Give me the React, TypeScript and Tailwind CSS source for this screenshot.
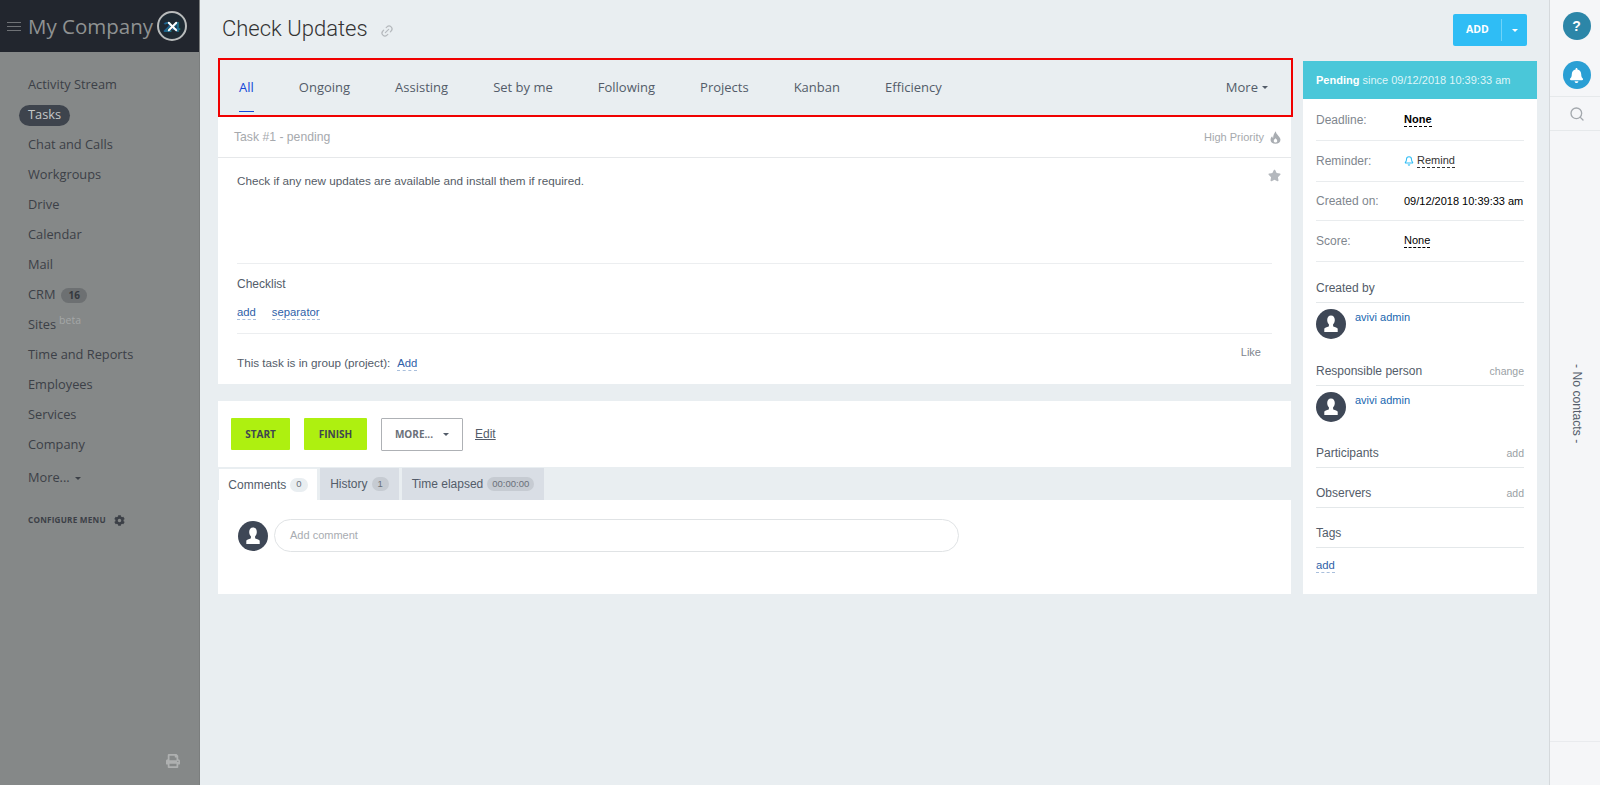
import React from "react";
import { Bell, Link2, Search, X } from "lucide-react";
import { FaCog, FaPrint, FaStar, FaBell } from "react-icons/fa";

const body = "font-['Liberation_Sans',Arial,sans-serif]";
const open = "font-['Open_Sans',sans-serif]";

const menu = [
  "Activity Stream",
  "Tasks",
  "Chat and Calls",
  "Workgroups",
  "Drive",
  "Calendar",
  "Mail",
  "CRM",
  "Sites",
  "Time and Reports",
  "Employees",
  "Services",
  "Company",
];

const tabs = ["All", "Ongoing", "Assisting", "Set by me", "Following", "Projects", "Kanban", "Efficiency"];

const Caret = ({ className = "" }: { className?: string }) => (
  <span className={`inline-block w-0 h-0 border-x-[3px] border-x-transparent border-t-[3px] ${className}`} />
);

const Avatar = () => (
  <svg viewBox="0 0 30 30" className="w-[30px] h-[30px] shrink-0">
    <circle cx="15" cy="15" r="15" fill="#3e4756" />
    <path
      d="M15 6.5c-2.4 0-3.8 1.9-3.8 4.4 0 1.8.7 3.4 1.7 4.4v1.9c-.6.7-4.2 1.2-4.6 2.6v3.2h13.400v-3.200c-.4-1.400-4-1.900-4.600-2.600v-1.900c1-1 1.700-2.600 1.700-4.400 0-2.500-1.400-4.400-3.800-4.400z"
      fill="#fff"
    />
  </svg>
);

const Flame = () => (
  <svg viewBox="0 0 12 14" className="w-[11px] h-[13px]">
    <path
      fillRule="evenodd"
      d="M6.300.3c.3 2.200 1.300 3.200 2.700 4.700 1.300 1.400 2.400 2.700 2.400 4.400 0 2.600-2.300 4.500-5.400 4.500S.6 12 .6 9.400c0-1.500.7-2.800 1.700-3.700.1 1 .5 1.600 1.100 2C3.500 4.800 4.600 2.200 6.300.3zM6 7.800c-1.100 1-1.900 1.800-1.900 2.900 0 1 .8 1.700 1.900 1.700s1.900-.7 1.900-1.700c0-1.100-.8-1.900-1.900-2.900z"
      fill="#a9adb2"
    />
  </svg>
);

const DashLink = ({ children }: { children: React.ReactNode }) => (
  <a className="text-[11.3px] text-[#2f5fa8] border-b border-dashed border-[#a9bfdc] leading-[14px]">{children}</a>
);

const InfoRow = ({ label, children, h }: { label: string; children: React.ReactNode; h: string }) => (
  <div className={`flex items-center border-b border-[#e9ecee] ${h}`}>
    <span className="w-[88px] text-[#80868e] text-[12px]">{label}</span>
    {children}
  </div>
);

const Section = ({ title, action, h = "h-[40px]" }: { title: string; action?: string; h?: string }) => (
  <div className={`flex items-end justify-between border-b border-[#e4e8ea] pb-[5px] ${h}`}>
    <span className="text-[#535c69] text-[12px]">{title}</span>
    {action && <span className="text-[#9a9fa5] text-[10.5px]">{action}</span>}
  </div>
);

const Person = () => (
  <div className="flex gap-[9px] pt-[6px] h-[59px]">
    <Avatar />
    <a className="text-[#2067b0] text-[11px]">avivi admin</a>
  </div>
);

const Sidebar = () => (
  <aside className={`w-[200px] shrink-0 bg-[#858888] border-r border-[#7b7e7e] flex flex-col ${open}`}>
    <div className="h-[52px] bg-[#22262e] flex items-center pl-[7px] shrink-0">
      <div className="w-[14px] flex flex-col gap-[3px]">
        <span className="h-[1px] bg-[#6f7276]" />
        <span className="h-[1px] bg-[#6f7276]" />
        <span className="h-[1px] bg-[#6f7276]" />
      </div>
      <span className="ml-[7px] text-[20.5px] font-medium leading-none text-[#8f9292] whitespace-nowrap">My Company</span>
      <div className="relative ml-[4px] w-[30px] h-[30px] rounded-full border-2 border-[#b9bcbc] bg-[#1e2a33] flex items-center justify-center shrink-0">
        <span className="absolute text-[15px] font-bold text-[#1f6a8c]">24</span>
        <X size={15} strokeWidth={3} className="relative text-white" />
      </div>
    </div>
    <nav className="pt-[18px] flex-1 flex flex-col">
      {menu.map((item) => (
        <div key={item} className="h-[30px] pl-[28px] flex items-center text-[12.8px] text-[#3c4047]">
          {item === "Tasks" ? (
            <span className="-ml-[9px] px-[9px] h-[21px] rounded-full bg-[#3e444d] text-[#c5c8c8] flex items-center">
              Tasks
            </span>
          ) : (
            item
          )}
          {item === "CRM" && (
            <span className="ml-[6px] px-[7px] h-[15px] rounded-full bg-[#6d7072] text-[10px] font-bold text-[#34383e] flex items-center">
              16
            </span>
          )}
          {item === "Sites" && <sup className="ml-[3px] text-[10.5px] text-[#a4a7a7]">beta</sup>}
        </div>
      ))}
      <div className="h-[36px] pl-[28px] flex items-center gap-[5px] text-[12.8px] text-[#3c4047]">
        More... <Caret className="border-t-[#3c4047]" />
      </div>
      <div className="pl-[28px] mt-[18px] flex items-center gap-[8px] text-[8.2px] font-bold text-[#3c4047] tracking-[0.2px]">
        CONFIGURE MENU <FaCog size={11} />
      </div>
      <div className="mt-auto mb-[17px] pr-[19px] flex justify-end">
        <FaPrint size={14} className="text-[#aeb0b0]" />
      </div>
    </nav>
  </aside>
);

const RightRail = () => (
  <aside className={`w-[51px] shrink-0 bg-[#f5f6f8] border-l border-[#d5d9dc] flex flex-col ${body}`}>
    <div className="h-[97px] shrink-0 border-b border-[#e6e9eb] flex flex-col items-center pt-[12px] pl-[3px] gap-[21px]">
      <div className="w-[28px] h-[28px] rounded-full bg-[#2c86a8] text-white text-[14px] font-bold flex items-center justify-center">
        ?
      </div>
      <div className="w-[28px] h-[28px] rounded-full bg-[#2a9fd4] text-white flex items-center justify-center">
        <FaBell size={15} />
      </div>
    </div>
    <div className="h-[34px] shrink-0 border-b border-[#e6e9eb] flex items-center justify-center pl-[3px]">
      <Search size={16} className="text-[#a3a8ad]" />
    </div>
    <div className="flex-1 flex justify-center pt-[233px] pl-[3px]">
      <span className="[writing-mode:vertical-rl] text-[12.2px] text-[#535c69] h-fit">- No contacts -</span>
    </div>
    <div className="h-[44px] shrink-0 border-t border-[#e9ebee]" />
  </aside>
);

export default function App() {
  return (
    <div className={`flex w-[1600px] h-[785px] overflow-hidden bg-[#e9eef1] ${body}`}>
      <Sidebar />
      <main className="flex-1 min-w-0 flex flex-col pl-[18px] pr-[12px]">
        <div className="h-[58px] flex items-start justify-between shrink-0">
          <div className="flex items-center gap-[12px] pl-[4px] pt-[15px]">
            <h1 className="text-[22px] font-light leading-[28px] text-[#333] font-['Roboto',sans-serif]">Check Updates</h1>
            <Link2 size={14} className="text-[#b5b9bd] -rotate-45 mt-[3px]" />
          </div>
          <div className="mt-[14px] w-[74px] h-[32px] mr-[10px] bg-[#2fbdf5] rounded-[2px] flex items-center text-white">
            <span className={`w-[48px] pl-[1px] text-center text-[10.5px] font-bold ${open}`}>ADD</span>
            <span className="w-[1px] h-[22px] bg-[#6fd3f8]" />
            <span className="flex-1 flex justify-center">
              <Caret className="border-t-white border-x-[3.5px]" />
            </span>
          </div>
        </div>

        <div className="flex gap-[10px] items-start">
          <div className="w-[1075px] shrink-0">
            <div className={`h-[59px] border-2 border-[#f00000] flex items-center pl-[19px] pr-[23px] gap-[45px] text-[13px] font-medium text-[#535c69] ${open}`}>
              {tabs.map((t) => (
                <div key={t} className={`relative ${t === "All" ? "text-[#1446d8]" : ""}`}>
                  {t}
                  {t === "All" && <span className="absolute left-0 right-0 -bottom-[15px] h-[1.5px] bg-[#1446d8]" />}
                </div>
              ))}
              <div className="ml-auto flex items-center gap-[4px]">
                More <Caret className="border-t-[#535c69]" />
              </div>
            </div>

            <section className="w-[1073px] bg-white h-[267px] flex flex-col">
              <div className="h-[41px] shrink-0 border-b border-[#e6e8ea] pl-[16px] pr-[10px] flex items-center justify-between">
                <span className="text-[12.2px] text-[#a6a9ad]">Task #1 - pending</span>
                <span className="flex items-center gap-[6px] text-[11px] text-[#a6a9ad]">
                  High Priority <Flame />
                </span>
              </div>
              <div className="px-[19px] flex-1 flex flex-col">
                <div className="h-[106px] shrink-0 border-b border-[#eceef0] pt-[14px] relative text-[11.7px] text-[#555c66]">
                  Check if any new updates are available and install them if required.
                  <FaStar size={13} className="absolute -right-[9px] top-[11px] text-[#b4b8bd]" />
                </div>
                <div className="h-[70px] shrink-0 border-b border-[#eceef0] text-[12px]">
                  <div className="pt-[11px] text-[#535c69]">Checklist</div>
                  <div className="mt-[12px] flex gap-[16px]">
                    <DashLink>add</DashLink>
                    <DashLink>separator</DashLink>
                  </div>
                </div>
                <div className="flex-1 flex items-start justify-between pt-[20px] text-[11.7px] text-[#535c69]">
                  <div className="flex items-baseline gap-[7px]">
                    This task is in group (project): <DashLink>Add</DashLink>
                  </div>
                  <span className="-mt-[10px] mr-[11px] text-[11px] text-[#80868e]">Like</span>
                </div>
              </div>
            </section>

            <section className="w-[1073px] mt-[17px] bg-white h-[193px] flex flex-col">
              <div className="h-[66px] shrink-0 pl-[13px] pt-[17px] flex items-start gap-[14px]">
                <button className={`w-[59px] h-[32px] bg-[#aef010] text-[10px] font-bold text-[#3f4650] rounded-[1px] ${open}`}>START</button>
                <button className={`w-[63px] h-[32px] bg-[#aef010] text-[10px] font-bold text-[#3f4650] rounded-[1px] ${open}`}>FINISH</button>
                <button className={`w-[82px] h-[33px] border border-[#aeb1b5] text-[10px] font-bold text-[#6a7079] rounded-[1px] flex items-center justify-center gap-[10px] ${open}`}>
                  MORE... <Caret className="border-t-[#535c69]" />
                </button>
                <a className="h-[32px] flex items-center -ml-[2px] text-[12px] text-[#535c69] underline">Edit</a>
              </div>
              <div className="h-[33px] shrink-0 bg-[#e9eef1] flex items-end pt-[1px] gap-[3px] text-[12px] text-[#535c69]">
                <div className="h-[31px] w-[98px] ml-[1px] bg-white flex items-center justify-center gap-[4px]">
                  Comments
                  <span className="px-[6px] h-[14px] rounded-full bg-[#e9eef1] text-[9.5px] text-[#6a7079] flex items-center">0</span>
                </div>
                <div className="h-[32px] w-[79px] bg-[#d9dee5] flex items-center justify-center gap-[4px]">
                  History
                  <span className="px-[6px] h-[14px] rounded-full bg-[#c6cbd2] text-[9.5px] text-[#6a7079] flex items-center">1</span>
                </div>
                <div className="h-[32px] w-[142px] bg-[#d9dee5] flex items-center justify-center gap-[4px]">
                  Time elapsed
                  <span className="px-[5px] h-[14px] rounded-full bg-[#c6cbd2] text-[9.5px] text-[#6a7079] flex items-center">00:00:00</span>
                </div>
              </div>
              <div className="pl-[20px] pt-[19px] flex items-center gap-[6px]">
                <Avatar />
                <div className="w-[685px] h-[33px] rounded-full border border-[#e0e3e5] pl-[15px] flex items-center text-[11px] text-[#a8acb1]">
                  Add comment
                </div>
              </div>
            </section>
          </div>

          <div className="w-[234px] h-[533px] mt-[3px] bg-white flex flex-col">
            <div className="h-[38px] shrink-0 bg-[#4ac7d9] text-white text-[11px] pl-[13px] flex items-center">
              <b>Pending</b>&nbsp;<span className="text-[#dff5f8]">since 09/12/2018 10:39:33 am</span>
            </div>
            <div className="px-[13px] flex-1 flex flex-col">
              <InfoRow label="Deadline:" h="h-[42px]">
                <span className="text-[11px] font-bold text-black border-b border-dashed border-black leading-[13px]">None</span>
              </InfoRow>
              <InfoRow label="Reminder:" h="h-[41px]">
                <span className="flex items-center gap-[3px] text-[11px] text-[#333]">
                  <Bell size={10} strokeWidth={2.5} className="text-[#2fbdf5]" />
                  <span className="border-b border-dashed border-[#333] leading-[13px]">Remind</span>
                </span>
              </InfoRow>
              <InfoRow label="Created on:" h="h-[39px]">
                <span className="text-[11px] text-black whitespace-nowrap">09/12/2018 10:39:33 am</span>
              </InfoRow>
              <InfoRow label="Score:" h="h-[41px]">
                <span className="text-[11px] text-black border-b border-dashed border-black leading-[13px]">None</span>
              </InfoRow>
              <Section title="Created by" h="h-[41px]" />
              <Person />
              <Section title="Responsible person" action="change" h="h-[24px]" />
              <Person />
              <Section title="Participants" action="add" h="h-[23px]" />
              <Section title="Observers" action="add" />
              <Section title="Tags" />
              <div className="pt-[10px] flex">
                <DashLink>add</DashLink>
              </div>
            </div>
          </div>
        </div>
      </main>
      <RightRail />
    </div>
  );
}
